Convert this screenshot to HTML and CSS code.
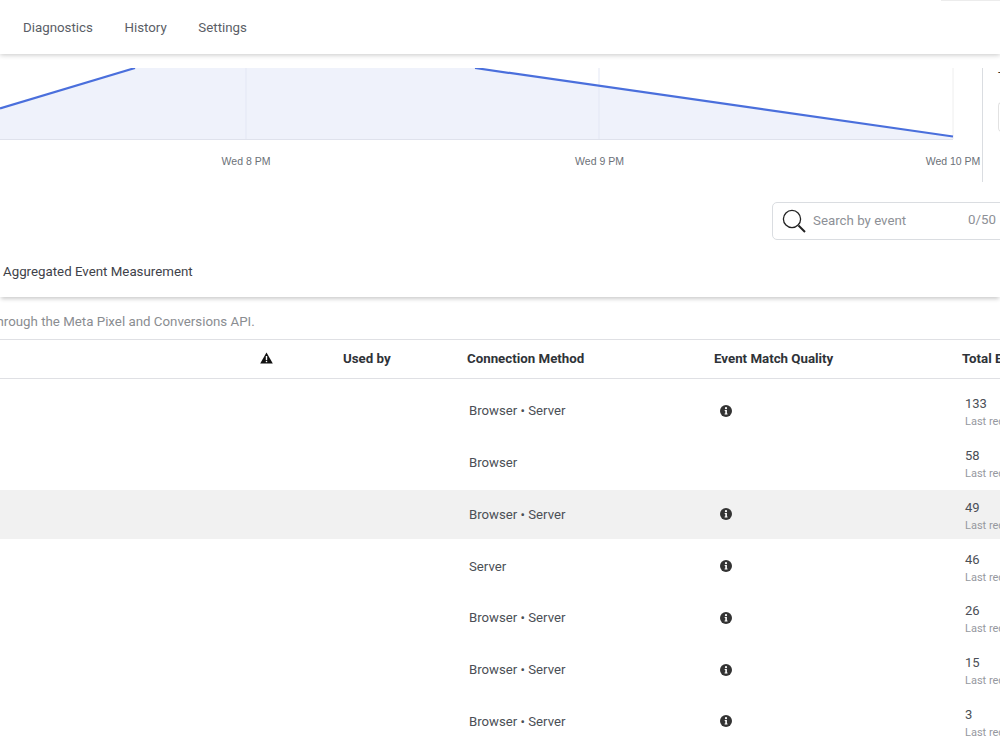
FILE: index.html
```html
<!DOCTYPE html>
<html lang="en">
<head>
<meta charset="utf-8">
<title>Events Manager</title>
<link rel="stylesheet" href="styles.css">
</head>
<body>
<div class="page">
  <header class="topbar">
    <span class="topbar-pill"></span>
    <nav class="tabs">
      <span>Diagnostics</span>
      <span>History</span>
      <span>Settings</span>
    </nav>
  </header>

  <section class="chart-section">
    <div class="chart-col">
      <svg class="chart" width="982" height="72" viewBox="0 0 982 72">
        <polygon class="area" points="0,71 0,40.5 135,0 475,0 953,68.5 953,71"/>
        <line class="grid" x1="246" y1="0" x2="246" y2="71"/>
        <line class="grid" x1="599" y1="0" x2="599" y2="71"/>
        <line class="grid-end" x1="953" y1="0" x2="953" y2="71"/>
        <line class="base" x1="0" y1="71.5" x2="953" y2="71.5"/>
        <polyline class="trend" points="0,40.5 135,0"/>
        <polyline class="trend" points="475,0 953,68.5"/>
      </svg>
      <div class="axis">
        <span>Wed 8 PM</span>
        <span>Wed 9 PM</span>
        <span>Wed 10 PM</span>
      </div>
    </div>
    <aside class="side">
      <span class="side-title">T</span>
      <span class="side-box"></span>
    </aside>
  </section>

  <div class="search-row">
    <div class="search">
      <svg class="search-icon" width="24" height="24" viewBox="0 0 24 24">
        <circle cx="10" cy="10" r="8.6"/>
        <line class="handle" x1="16.5" y1="16.5" x2="23" y2="23"/>
      </svg>
      <span class="search-text">Search by event</span>
      <span class="search-count">0/50</span>
    </div>
  </div>

  <div class="subnav"><span>Aggregated Event Measurement</span></div>

  <p class="caption">Check events received through the Meta Pixel and Conversions API.</p>

  <div class="table">
    <div class="thead">
      <div class="warn-cell">
        <svg width="13" height="12" viewBox="0 0 13 12"><path d="M6.5 .6 12.8 11.4H.2Z" fill="#111"/><rect x="5.8" y="4" width="1.4" height="4" fill="#fff"/><rect x="5.8" y="8.8" width="1.4" height="1.4" fill="#fff"/></svg>
      </div>
      <div>Used by</div>
      <div>Connection Method</div>
      <div>Event Match Quality</div>
      <div>Total Events</div>
    </div>
    <div class="tbody">
      <div class="row">
        <div class="method">Browser • Server</div>
        <div class="quality"><svg class="info" viewBox="0 0 12 12"><circle cx="6" cy="6" r="6"/><circle class="i" cx="6" cy="3.2" r="1.1"/><path class="i" d="M4.7 5h2.2v3.4h.6v1H4.6v-1h.7V6h-.6Z"/></svg></div>
        <div class="total"><b>133</b><small>Last received 1 hour ago</small></div>
      </div>
      <div class="row">
        <div class="method">Browser</div>
        <div class="quality"></div>
        <div class="total"><b>58</b><small>Last received 1 hour ago</small></div>
      </div>
      <div class="row active">
        <div class="method">Browser • Server</div>
        <div class="quality"><svg class="info" viewBox="0 0 12 12"><circle cx="6" cy="6" r="6"/><circle class="i" cx="6" cy="3.2" r="1.1"/><path class="i" d="M4.7 5h2.2v3.4h.6v1H4.6v-1h.7V6h-.6Z"/></svg></div>
        <div class="total"><b>49</b><small>Last received 1 hour ago</small></div>
      </div>
      <div class="row">
        <div class="method">Server</div>
        <div class="quality"><svg class="info" viewBox="0 0 12 12"><circle cx="6" cy="6" r="6"/><circle class="i" cx="6" cy="3.2" r="1.1"/><path class="i" d="M4.7 5h2.2v3.4h.6v1H4.6v-1h.7V6h-.6Z"/></svg></div>
        <div class="total"><b>46</b><small>Last received 1 hour ago</small></div>
      </div>
      <div class="row">
        <div class="method">Browser • Server</div>
        <div class="quality"><svg class="info" viewBox="0 0 12 12"><circle cx="6" cy="6" r="6"/><circle class="i" cx="6" cy="3.2" r="1.1"/><path class="i" d="M4.7 5h2.2v3.4h.6v1H4.6v-1h.7V6h-.6Z"/></svg></div>
        <div class="total"><b>26</b><small>Last received 1 hour ago</small></div>
      </div>
      <div class="row">
        <div class="method">Browser • Server</div>
        <div class="quality"><svg class="info" viewBox="0 0 12 12"><circle cx="6" cy="6" r="6"/><circle class="i" cx="6" cy="3.2" r="1.1"/><path class="i" d="M4.7 5h2.2v3.4h.6v1H4.6v-1h.7V6h-.6Z"/></svg></div>
        <div class="total"><b>15</b><small>Last received 1 hour ago</small></div>
      </div>
      <div class="row">
        <div class="method">Browser • Server</div>
        <div class="quality"><svg class="info" viewBox="0 0 12 12"><circle cx="6" cy="6" r="6"/><circle class="i" cx="6" cy="3.2" r="1.1"/><path class="i" d="M4.7 5h2.2v3.4h.6v1H4.6v-1h.7V6h-.6Z"/></svg></div>
        <div class="total"><b>3</b><small>Last received 1 hour ago</small></div>
      </div>
    </div>
  </div>
</div>
</body>
</html>
```
FILE: styles.css
```css
* { box-sizing: border-box; }
html, body { margin: 0; height: 100%; overflow: hidden; background: #fff; }
body { font-family: Roboto, "Liberation Sans", sans-serif; color: #444950; }
.page { width: 1000px; height: 750px; overflow: hidden; }

.topbar { position: relative; height: 54px; background: #fff; box-shadow: 0 1px 5px rgba(0,0,0,.22); padding-left: 23px; display: flex; align-items: center; }
.topbar-pill { position: absolute; top: 0; right: 0; width: 59px; height: 1px; background: #ececec; }
.tabs { display: flex; gap: 31.6px; font-size: 13.3px; color: #5a5e66; }

.chart-section { display: flex; margin-top: 14px; height: 114px; }
.chart-col { flex: none; width: 983px; border-right: 1px solid #dadde1; }
.chart { display: block; }
.area { fill: #eff2fb; }
.grid { stroke: #e3e7f4; stroke-width: 1; }
.grid-end { stroke: #eeeeee; stroke-width: 1; }
.base { stroke: #dfe2ec; stroke-width: 1; }
.trend { fill: none; stroke: #4a6fdc; stroke-width: 2.2; }
.axis { display: flex; padding-left: 196px; gap: 253.5px; padding-top: 13px; width: 1100px; }
.axis span { flex: none; width: 100px; text-align: center; font: 10.5px/16px "Liberation Sans", sans-serif; color: #6c7178; }
.side { padding-left: 15px; display: flex; flex-direction: column; }
.side-title { font-size: 13px; line-height: 18px; color: #333; }
.side-box { margin-top: 16px; width: 6px; height: 30px; border: 1px solid #e2e2e2; border-right: 0; border-radius: 4px 0 0 4px; }

.search-row { height: 72px; padding: 20px 0 0 772px; width: 1100px; }
.search { width: 260px; height: 38px; border: 1px solid #dadde1; border-radius: 5px; display: flex; align-items: center; padding-left: 9px; }
.search-icon { flex: none; }
.search-icon circle { fill: none; stroke: #222; stroke-width: 1.3; }
.handle { stroke: #222; stroke-width: 2; }
.search-text { margin: 0 0 2px 7px; width: 155px; font-size: 13.3px; color: #8d9096; }
.search-count { margin-bottom: 3px; font-size: 13.3px; color: #8d9096; }

.subnav { height: 43px; background: #fff; padding: 0 0 8px 3px; display: flex; align-items: center; font-size: 13.3px; color: #3e4249; box-shadow: 0 3px 4px -1px rgba(0,0,0,.2); }

.caption { margin: 17px 0 0 -143px; font-size: 13.3px; line-height: 16px; color: #8a8d91; white-space: nowrap; }

.table { margin-top: 9px; width: 1200px; }
.thead { display: grid; grid-template-columns: 343px 124px 247px 248px 238px; align-items: center; height: 40px; border-top: 1px solid #dfe0e4; border-bottom: 1px solid #dfe0e4; padding-bottom: 2px; font-size: 13.3px; font-weight: 700; color: #2f3338; }
.warn-cell { padding-left: 260px; }
.warn-cell svg { display: block; }
.tbody { padding-top: 7px; display: flex; flex-direction: column; gap: 2.25px; }
.row { display: grid; align-items: center; height: 49.5px; padding-left: 469px; font-size: 13.2px; color: #4b4f56; grid-template-columns: 251px 245px 235px; }
.row.active { background: #f1f1f1; }
.method { white-space: nowrap; }
.quality { display: flex; }
.info { width: 12px; height: 12px; display: block; }
.info circle:first-child { fill: #333; }
.info .i { fill: #fff; }
.total { display: flex; flex-direction: column; padding-top: 3px; }
.total b { font-weight: 400; font-size: 13px; line-height: 19px; color: #4b4f56; }
.total small { font-size: 11px; line-height: 17px; color: #96999f; white-space: nowrap; }
```
